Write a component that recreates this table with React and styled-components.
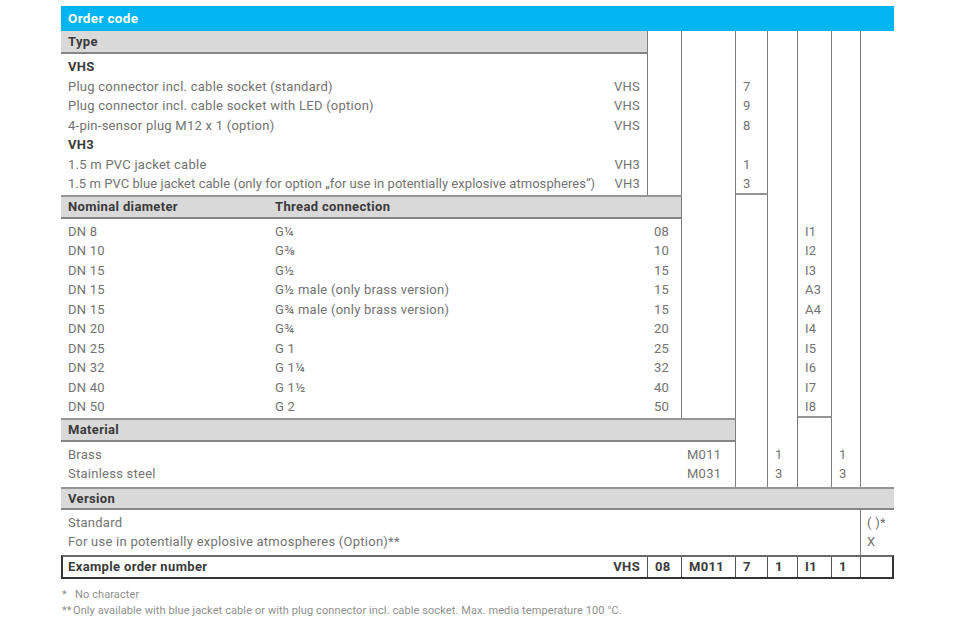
import React from "react";
import styled, { createGlobalStyle } from "styled-components";

const GlobalStyle = createGlobalStyle`
    *, *::before, *::after {
        box-sizing: border-box;
    }

    body {
        margin: 0;
        background: #ffffff;
        font-family: Roboto, "Liberation Sans", Arial, sans-serif;
    }
`;

const LINE = "#7d7d7d";
const RULE = "#959595";
const INK = "#3b3b3b";

const Sheet = styled.div`
    padding: 6px 0 0 61px;
`;

const Table = styled.div`
    display: grid;
    grid-template-columns: 587px 34px 54px 32px 30px 34px 29px 33px;
    grid-template-rows: 25px 23px auto 24px auto 24px auto 23px auto 24px;
    width: 833px;
    font-size: 13px;
    letter-spacing: 0.25px;
    color: #737373;
`;

const TitleBar = styled.div`
    grid-column: 1 / -1;
    grid-row: 1;
    background: #00b5f1;
    color: #ffffff;
    font-size: 13.5px;
    font-weight: 700;
    letter-spacing: 0.35px;
    line-height: 25px;
    padding-left: 7px;
`;

const SectionHead = styled.div`
    grid-column: ${(p) => p.$cols};
    grid-row: ${(p) => p.$row};
    display: flex;
    align-items: center;
    background: #d9d9da;
    border-top: ${(p) => (p.$first ? "none" : `2px solid ${RULE}`)};
    border-bottom: 2px solid #858585;
    border-right: ${(p) => (p.$full ? "none" : `1px solid ${LINE}`)};
    color: ${INK};
    font-size: 13px;
    font-weight: 700;
    letter-spacing: 0.35px;
    padding-left: 7px;
`;

const SectionBody = styled.div`
    grid-column: ${(p) => p.$cols};
    grid-row: ${(p) => p.$row};
    border-right: 1px solid ${LINE};
    padding: 3px 0 ${(p) => p.$pb || 1}px 7px;
`;

const Row = styled.div`
    display: flex;
    height: 19.5px;
    line-height: 19.5px;
    white-space: nowrap;
`;

const SubTitle = styled(Row)`
    color: ${INK};
    font-weight: 700;
    letter-spacing: 0.35px;
`;

const Label = styled.span`
    flex: ${(p) => (p.$w ? "none" : "1")};
    width: ${(p) => (p.$w ? `${p.$w}px` : "auto")};
    letter-spacing: ${(p) => (p.$tight != null ? `${p.$tight}px` : "inherit")};
`;

const Code = styled.span`
    flex: none;
    width: ${(p) => (p.$w ? `${p.$w}px` : "auto")};
    padding-left: ${(p) => p.$pl || 0}px;
    padding-right: ${(p) => p.$pr || 0}px;
`;

const Strip = styled.div`
    grid-column: ${(p) => p.$col};
    grid-row: ${(p) => p.$rows};
    border-right: ${(p) => (p.$open ? "none" : `1px solid ${LINE}`)};
    border-bottom: ${(p) => (p.$closed ? `2px solid ${RULE}` : "none")};
`;

const ValueList = styled.div`
    grid-column: ${(p) => p.$col};
    grid-row: ${(p) => p.$row};
    padding: 3px 0 ${(p) => p.$pb || 1}px ${(p) => p.$pl || 7}px;
    z-index: 1;
`;

const ExampleRow = styled.div`
    grid-column: 1 / -1;
    grid-row: 10;
    display: grid;
    grid-template-columns: 585px 34px 54px 32px 30px 34px 29px 31px;
    border: 2px solid #333333;
    border-top-color: #6a6a6a;
    color: ${INK};
    font-size: 13px;
    font-weight: 700;
    letter-spacing: 0.35px;
    line-height: 20px;
`;

const ExampleCell = styled.div`
    display: flex;
    justify-content: ${(p) => (p.$spread ? "space-between" : "flex-start")};
    padding: 0 7px 0 ${(p) => (p.$spread ? 5 : 7)}px;
    border-right: ${(p) => (p.$last ? "none" : "1px solid #555555")};
    white-space: nowrap;
`;

const Notes = styled.div`
    margin-top: 8px;
    padding-left: 1px;
    font-size: 11px;
    letter-spacing: 0.1px;
    line-height: 16px;
    color: #8f8f8f;
`;

const Note = styled.div`
    display: flex;
    white-space: nowrap;
`;

const Mark = styled.span`
    flex: none;
    width: ${(p) => p.$w}px;
`;

const typeRows = [
    { sub: "VHS" },
    { label: "Plug connector incl. cable socket (standard)", code: "VHS", v: "7" },
    { label: "Plug connector incl. cable socket with LED (option)", code: "VHS", v: "9" },
    { label: "4-pin-sensor plug M12 x 1 (option)", code: "VHS", v: "8" },
    { sub: "VH3" },
    { label: "1.5 m PVC jacket cable", code: "VH3", v: "1" },
    {
        label: "1.5 m PVC blue jacket cable (only for option \u201efor use in potentially explosive atmospheres\u201c)",
        code: "VH3",
        v: "3",
        tight: 0.05,
    },
];

const diameterRows = [
    ["DN 8", "G¼", "08", "I1"],
    ["DN 10", "G⅜", "10", "I2"],
    ["DN 15", "G½", "15", "I3"],
    ["DN 15", "G½ male (only brass version)", "15", "A3"],
    ["DN 15", "G¾ male (only brass version)", "15", "A4"],
    ["DN 20", "G¾", "20", "I4"],
    ["DN 25", "G 1", "25", "I5"],
    ["DN 32", "G 1¼", "32", "I6"],
    ["DN 40", "G 1½", "40", "I7"],
    ["DN 50", "G 2", "50", "I8"],
];

const materialRows = [
    ["Brass", "M011", "1", "1"],
    ["Stainless steel", "M031", "3", "3"],
];

const versionRows = [
    ["Standard", "( )*"],
    ["For use in potentially explosive atmospheres (Option)**", "X"],
];

const example = ["08", "M011", "7", "1", "I1", "1", ""];

const Values = ({ items, ...rest }) => (
    <ValueList {...rest}>
        {items.map((v, i) => (
            <Row key={i}>{v}</Row>
        ))}
    </ValueList>
);

export default function App() {
    return (
        <>
            <GlobalStyle />
            <Sheet>
                <Table>
                    <TitleBar>Order code</TitleBar>

                    {/* column strips of the staircase */}
                    <Strip $col={2} $rows="2 / 4" />
                    <Strip $col={3} $rows="2 / 6" />
                    <Strip $col={4} $rows="2 / 4" $closed />
                    <Strip $col={4} $rows="4 / 8" />
                    <Strip $col={5} $rows="2 / 8" />
                    <Strip $col={6} $rows="2 / 6" $closed />
                    <Strip $col={6} $rows="6 / 8" />
                    <Strip $col={7} $rows="2 / 8" />
                    <Strip $col={8} $rows="2 / 8" $open />

                    {/* Type */}
                    <SectionHead $cols="1" $row={2} $first>
                        Type
                    </SectionHead>
                    <SectionBody $cols="1" $row={3}>
                        {typeRows.map((r, i) =>
                            r.sub ? (
                                <SubTitle key={i}>{r.sub}</SubTitle>
                            ) : (
                                <Row key={i}>
                                    <Label $tight={r.tight}>{r.label}</Label>
                                    <Code $pr={7}>{r.code}</Code>
                                </Row>
                            )
                        )}
                    </SectionBody>
                    <Values $col={4} $row={3} items={typeRows.map((r) => r.v || "")} />

                    {/* Nominal diameter */}
                    <SectionHead $cols="1 / 3" $row={4}>
                        <Label $w={207}>Nominal diameter</Label>
                        <Label>Thread connection</Label>
                    </SectionHead>
                    <SectionBody $cols="1 / 3" $row={5}>
                        {diameterRows.map((r, i) => (
                            <Row key={i}>
                                <Label $w={207}>{r[0]}</Label>
                                <Label>{r[1]}</Label>
                                <Code $w={34} $pl={7}>
                                    {r[2]}
                                </Code>
                            </Row>
                        ))}
                    </SectionBody>
                    <Values $col={6} $row={5} items={diameterRows.map((r) => r[3])} />

                    {/* Material */}
                    <SectionHead $cols="1 / 4" $row={6}>
                        Material
                    </SectionHead>
                    <SectionBody $cols="1 / 4" $row={7} $pb={3}>
                        {materialRows.map((r, i) => (
                            <Row key={i}>
                                <Label>{r[0]}</Label>
                                <Code $w={54} $pl={6}>
                                    {r[1]}
                                </Code>
                            </Row>
                        ))}
                    </SectionBody>
                    <Values $col={5} $row={7} $pb={3} items={materialRows.map((r) => r[2])} />
                    <Values $col={7} $row={7} $pb={3} items={materialRows.map((r) => r[3])} />

                    {/* Version */}
                    <SectionHead $cols="1 / -1" $row={8} $full>
                        Version
                    </SectionHead>
                    <SectionBody $cols="1 / 8" $row={9} $pb={3}>
                        {versionRows.map((r, i) => (
                            <Row key={i}>
                                <Label>{r[0]}</Label>
                            </Row>
                        ))}
                    </SectionBody>
                    <Values $col={8} $row={9} $pb={3} $pl={6} items={versionRows.map((r) => r[1])} />

                    <ExampleRow>
                        <ExampleCell $spread>
                            <span>Example order number</span>
                            <span>VHS</span>
                        </ExampleCell>
                        {example.map((v, i) => (
                            <ExampleCell key={i} $last={i === example.length - 1}>
                                {v}
                            </ExampleCell>
                        ))}
                    </ExampleRow>
                </Table>

                <Notes>
                    <Note>
                        <Mark $w={13}>*</Mark>
                        <span>No character</span>
                    </Note>
                    <Note>
                        <Mark $w={11}>**</Mark>
                        <span>
                            Only available with blue jacket cable or with plug connector incl. cable socket. Max.
                            media temperature 100 °C.
                        </span>
                    </Note>
                </Notes>
            </Sheet>
        </>
    );
}
